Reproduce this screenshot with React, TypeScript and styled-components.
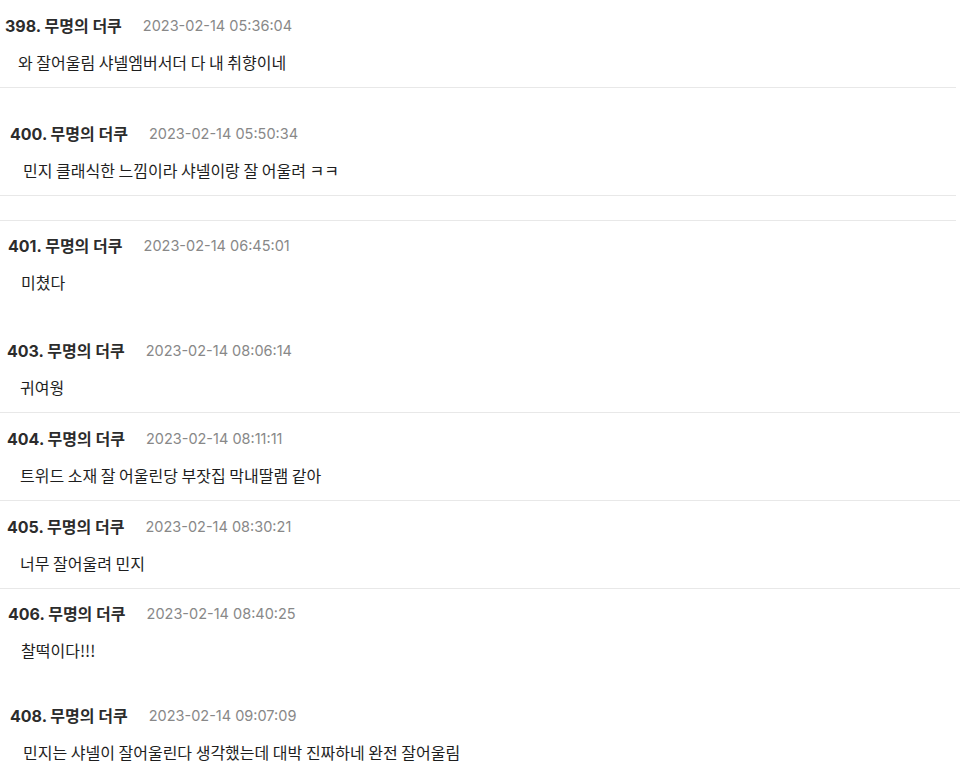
import styled, { createGlobalStyle } from 'styled-components'

const GlobalStyle = createGlobalStyle`
  html, body {
    margin: 0;
    padding: 0;
    background: #ffffff;
  }
  body {
    font-family: Inter, "Noto Sans CJK KR", sans-serif;
    -webkit-font-smoothing: antialiased;
  }
`

const List = styled.div`
  width: 960px;
  display: flex;
  flex-direction: column;
`

const Item = styled.div<{ $indent: number; $top: number; $bottom: number; $line: boolean; $inset: number }>`
  padding: ${(p) => p.$top}px 0 ${(p) => p.$bottom}px ${(p) => p.$indent}px;
  margin-right: ${(p) => p.$inset}px;
  border-bottom: 1px solid ${(p) => (p.$line ? '#e8e8e8' : 'transparent')};
`

const Head = styled.div`
  display: flex;
  align-items: center;
  height: 22px;
  gap: 21px;
`

const Author = styled.span`
  font-family: Inter, "Noto Sans CJK KR", sans-serif;
  font-size: 16px;
  font-weight: 700;
  color: #2c2c2c;
  white-space: nowrap;
`

const Stamp = styled.span`
  font-family: Inter, "Noto Sans CJK KR", sans-serif;
  font-size: 14.5px;
  color: #888888;
  white-space: nowrap;
`

const Body = styled.p`
  margin: 15px 0 0 13px;
  height: 22px;
  line-height: 22px;
  font-family: "Noto Sans CJK KR", sans-serif;
  font-size: 16px;
  color: #1e1e1e;
  white-space: nowrap;
`

const Spacer = styled.div`
  height: 24px;
  margin-right: 4px;
  border-bottom: 1px solid #e8e8e8;
`

type Comment = {
  no: number
  time: string
  text: string
  indent: number
  top?: number
  bottom?: number
  line?: boolean
  inset?: number
}

const comments: Comment[] = [
  { no: 398, time: '2023-02-14 05:36:04', text: '와 잘어울림 샤넬엠버서더 다 내 취향이네', indent: 5, inset: 4 },
  { no: 400, time: '2023-02-14 05:50:34', text: '민지 클래식한 느낌이라 샤넬이랑 잘 어울려 ㅋㅋ', indent: 10, top: 34, inset: 4 },
  { no: 401, time: '2023-02-14 06:45:01', text: '미쳤다', indent: 8, top: 13, bottom: 32, line: false },
  { no: 403, time: '2023-02-14 08:06:14', text: '귀여웡', indent: 7, top: 13 },
  { no: 404, time: '2023-02-14 08:11:11', text: '트위드 소재 잘 어울린당 부잣집 막내딸램 같아', indent: 7 },
  { no: 405, time: '2023-02-14 08:30:21', text: '너무 잘어울려 민지', indent: 7 },
  { no: 406, time: '2023-02-14 08:40:25', text: '찰떡이다!!!', indent: 8, top: 13, bottom: 28, line: false },
  { no: 408, time: '2023-02-14 09:07:09', text: '민지는 샤넬이 잘어울린다 생각했는데 대박 진짜하네 완전 잘어울림', indent: 10, line: false },
]

export default function App() {
  return (
    <>
      <GlobalStyle />
      <List>
        {comments.map((c) => (
          <div key={c.no}>
            <Item
              $indent={c.indent}
              $top={c.top ?? 14}
              $bottom={c.bottom ?? 14}
              $line={c.line ?? true}
              $inset={c.inset ?? 0}
            >
              <Head>
                <Author>{c.no}. 무명의 더쿠</Author>
                <Stamp>{c.time}</Stamp>
              </Head>
              <Body>{c.text}</Body>
            </Item>
            {c.no === 400 && <Spacer />}
          </div>
        ))}
      </List>
    </>
  )
}
